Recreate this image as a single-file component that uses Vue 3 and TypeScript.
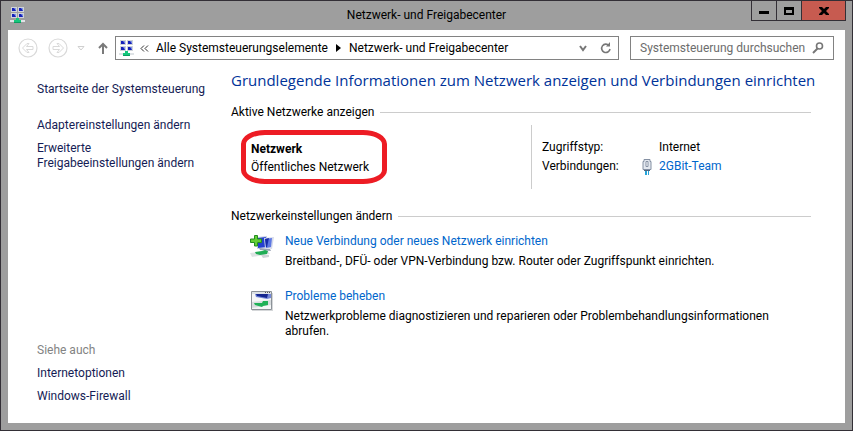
<script setup lang="ts">
import { ref } from 'vue'

interface Task {
  title: string
  text: string
  icon: 'add' | 'repair'
}

const tasks: Task[] = [
  {
    title: 'Neue Verbindung oder neues Netzwerk einrichten',
    text: 'Breitband-, DFÜ- oder VPN-Verbindung bzw. Router oder Zugriffspunkt einrichten.',
    icon: 'add',
  },
  {
    title: 'Probleme beheben',
    text: 'Netzwerkprobleme diagnostizieren und reparieren oder Problembehandlungsinformationen abrufen.',
    icon: 'repair',
  },
]

const query = ref('')
</script>

<template>
  <div class="window">
    <svg class="defs" width="0" height="0" aria-hidden="true">
      <defs>
        <symbol id="net" viewBox="0 0 16 16">
          <path d="M1 0h6v5H1zM8 0h6v5H8zM1 6h6v5H1zM8 6h6v5H8z" fill="#cfd3d9" />
          <path d="M2 1h4v3H2zM9 1h4v3H9zM2 7h4v3H2zM9 7h4v3H9z" fill="#8296e6" />
          <path d="M2 1h2l2 3H2zM9 1h2l2 3H9zM2 7h2l2 3H2zM9 7h2l2 3H9z" fill="#1520b8" />
          <path d="M0 13h15v2H0z" fill="#dfe3e6" />
          <path d="M6 11h3v2h2v3H4v-3h2z" fill="#15c77c" />
          <path d="M4 15h7v1H4z" fill="#0b9c60" />
        </symbol>
      </defs>
    </svg>

    <header class="titlebar">
      <svg class="app-icon" width="16" height="16"><use href="#net" /></svg>
      <h1>Netzwerk- und Freigabecenter</h1>
      <div class="controls">
        <button aria-label="Minimieren"><svg width="10" height="10"><path d="M0 5h10v3H0z" /></svg></button>
        <button aria-label="Maximieren"><svg width="10" height="10"><path d="M0 1h10v8H0zM2 4v3h6V4z" fill-rule="evenodd" /></svg></button>
        <button class="close" aria-label="Schließen">
          <svg width="10" height="10"><path d="M0 1h3l2 2 2-2h3v1L7 5l3 3v1H7L5 7 3 9H0V8l3-3-3-3z" /></svg>
        </button>
      </div>
    </header>

    <div class="panel">
      <nav class="toolbar">
        <button class="round" aria-label="Zurück" disabled>
          <svg width="20" height="20" fill="none" stroke="#d9d9d9">
            <circle cx="10" cy="10" r="9" stroke-width="1.2" />
            <path d="M4.5 10 9 5.5h2L8.5 8.5H15v3H8.5L11 14.5H9z" />
          </svg>
        </button>
        <button class="round" aria-label="Vorwärts" disabled>
          <svg width="20" height="20" fill="none" stroke="#d9d9d9">
            <circle cx="10" cy="10" r="9" stroke-width="1.2" />
            <path d="M15.5 10 11 5.5H9L11.5 8.5H5v3h6.5L9 14.5h2z" />
          </svg>
        </button>
        <button class="recent" aria-label="Zuletzt besucht" disabled>
          <svg width="8" height="5" fill="none" stroke="#cfcfcf"><path d="M1 .5h6L4 4z" /></svg>
        </button>
        <button class="up" aria-label="Nach oben">
          <svg width="10" height="12" fill="none" stroke="#7a7a7a" stroke-width="2"><path d="M5 12V2M1 6l4-4 4 4" /></svg>
        </button>
        <div class="address">
          <svg width="16" height="16"><use href="#net" /></svg>
          <svg class="chevrons" width="9" height="7" fill="none" stroke="#333"><path d="M4 .5l-3 3 3 3M8 .5l-3 3 3 3" /></svg>
          <a href="#elemente">Alle Systemsteuerungselemente</a>
          <svg class="arrow" width="5" height="8"><path d="M0 0l5 4-5 4z" /></svg>
          <a href="#center">Netzwerk- und Freigabecenter</a>
          <button class="drop" aria-label="Verlauf">
            <svg width="8" height="7" fill="none" stroke="#777" stroke-width="2"><path d="M1 1l3 4 3-4" /></svg>
          </button>
          <button aria-label="Aktualisieren">
            <svg width="12" height="12" fill="none" stroke="#777">
              <path d="M9 3.5A4.2 4.2 0 1 0 10 7" stroke-width="1.6" />
              <path d="M6 4.5h4V0z" fill="#777" stroke="none" />
            </svg>
          </button>
        </div>
        <label class="search">
          <input v-model="query" type="text" aria-label="Systemsteuerung durchsuchen" placeholder="Systemsteuerung durchsuchen" />
          <svg width="12" height="12" fill="none" stroke="#777"><circle cx="7.5" cy="4" r="3" stroke-width="1.6" /><path d="M5.5 6.5L1 11" stroke-width="2" /></svg>
        </label>
      </nav>

      <div class="body">
        <aside class="sidebar">
          <a class="home" href="#start">Startseite der Systemsteuerung</a>
          <a href="#adapter">Adaptereinstellungen ändern</a>
          <a href="#freigabe">Erweiterte Freigabeeinstellungen ändern</a>
          <span class="see-also">Siehe auch</span>
          <a href="#internet">Internetoptionen</a>
          <a href="#firewall">Windows-Firewall</a>
        </aside>

        <main class="main">
          <h2>Grundlegende Informationen zum Netzwerk anzeigen und Verbindungen einrichten</h2>

          <section>
            <h3>Aktive Netzwerke anzeigen</h3>
            <div class="active">
              <div class="left">
                <div class="network">
                  <strong>Netzwerk</strong>
                  <span>Öffentliches Netzwerk</span>
                </div>
              </div>
              <dl class="details">
                <dt>Zugriffstyp:</dt>
                <dd>Internet</dd>
                <dt>Verbindungen:</dt>
                <dd>
                  <svg class="plug" width="10" height="16">
                    <path d="M2 .5h6v2h1v8H1v-8h1z" fill="#e3e8ef" stroke="#8490a3" />
                    <path d="M4 2.5h2v5H4z" fill="#fff" stroke="#8490a3" />
                    <path d="M2 11h6v1H2z" fill="#53677e" />
                    <path d="M3 12h2v4H3zM6 12h1v4H6z" fill="#26a3d8" />
                  </svg>
                  <a href="#team">2GBit-Team</a>
                </dd>
              </dl>
            </div>
          </section>

          <section>
            <h3>Netzwerkeinstellungen ändern</h3>
            <ul class="tasks">
              <li v-for="task in tasks" :key="task.title">
                <svg v-if="task.icon === 'add'" width="24" height="24">
                  <path d="M7 3l10-1v12l-10 1z" fill="#c9d0e4" />
                  <path d="M8 4l8-1v10l-8 1z" fill="#2440cf" />
                  <path d="M14 4l10-1-2 12-7-1z" fill="#d5daea" />
                  <path d="M15 5l7-1-1 9-5 1z" fill="#5e78e2" />
                  <path d="M15 5l4-1-2 9h-1z" fill="#172ca9" />
                  <path d="M9 14l11 1 1 2-11-1z" fill="#98a1b4" />
                  <path d="M0 19l18-2 2 3-18 3z" fill="#dfe3e5" />
                  <path d="M5 18l7-1 3-1 3 1-1 3-7 1-4-1z" fill="#20ad55" />
                  <path d="M11 21l8 0 0 2-6 1z" fill="#ced3d6" />
                  <path d="M4.5 1.5h3v3.5h4v3.5h-4v3.5h-3v-3.5h-4v-3.5h4z" fill="#64ce35" stroke="#238d20" />
                </svg>
                <svg v-else width="24" height="24">
                  <path d="M2 4h21v18H2z" fill="#d5d7d9" />
                  <path d="M1.5 2.5h20v18h-20z" fill="#f5f6f7" stroke="#8c9298" />
                  <path d="M2 3h19v2H2z" fill="#dce1e6" />
                  <path d="M15 3h1v1h-1zM17 3h1v1h-1zM19 3h1v1h-1z" fill="#555" />
                  <path d="M5 5h16v4l-4 1-11-2z" fill="#7387d8" />
                  <path d="M6 5h12l-1 4-10-2z" fill="#14258f" />
                  <path d="M2 13l19-2v5l-19 3z" fill="#d8dddf" />
                  <path d="M4 14l8 0 1-2 5 0v4l-5 1-1 1-7-2z" fill="#1fb157" />
                </svg>
                <div class="task-text">
                  <a href="#aufgabe">{{ task.title }}</a>
                  <p>{{ task.text }}</p>
                </div>
              </li>
            </ul>
          </section>
        </main>
      </div>
    </div>
  </div>
</template>

<style>
body {
  margin: 0;
}
</style>

<style scoped>
.window {
  box-sizing: border-box;
  min-height: 100vh;
  display: flex;
  flex-direction: column;
  padding: 0 7px 7px;
  border: 1px solid #332f36;
  background: #9e9e9e;
  color: #000;
  font: 12px/15px Roboto, "Open Sans", sans-serif;
}
.defs {
  position: absolute;
}
svg {
  display: block;
  flex: none;
}
a {
  color: inherit;
  text-decoration: none;
}
button {
  display: flex;
  align-items: center;
  justify-content: center;
  padding: 0;
  border: 0;
  background: none;
}
h1,
h2,
h3,
p,
ul,
dl,
dd {
  margin: 0;
  padding: 0;
  font-size: 12px;
  font-weight: 400;
}
.titlebar {
  display: grid;
  grid-template-columns: 1fr auto 1fr;
  height: 29px;
}
.app-icon {
  margin: 6px 0 0 2px;
}
h1 {
  padding-top: 7px;
}
.controls {
  display: flex;
  justify-self: end;
  height: 19px;
  margin-right: -1px;
  border: solid #332f36;
  border-width: 0 1px 1px;
}
.controls button {
  width: 25px;
  border-right: 1px solid #332f36;
}
.controls .close {
  width: 43px;
  border: 0;
  background: #c75b50;
}
.panel {
  flex: 1;
  display: flex;
  flex-direction: column;
  background: #fff;
}
.toolbar {
  display: flex;
  align-items: center;
  padding: 6px 11px 0 10px;
}
.round {
  margin-right: 10px;
}
.recent {
  margin-left: -1px;
}
.up {
  margin: 0 7px 0 13px;
}
.address,
.search {
  box-sizing: border-box;
  display: flex;
  align-items: center;
  height: 24px;
  border: 1px solid #828282;
}
.address {
  flex: 1;
  padding: 0 6px 0 3px;
}
.chevrons {
  margin: 0 7px 0 5px;
}
.arrow {
  margin: 0 8px;
}
.drop {
  margin: 0 13px 0 auto;
}
.search {
  width: 204px;
  margin-left: 11px;
  padding: 0 9px;
}
.search input {
  flex: 1;
  min-width: 0;
  padding: 0;
  border: 0;
  outline: 0;
  background: none;
  font: inherit;
}
.search input::placeholder {
  color: #6d6d6d;
  opacity: 1;
}
.body {
  flex: 1;
  display: flex;
}
.sidebar {
  flex: none;
  width: 208px;
  box-sizing: border-box;
  display: flex;
  flex-direction: column;
  gap: 8px;
  padding: 22px 8px 19px 29px;
  color: #151c55;
}
.home {
  margin-bottom: 13px;
}
.see-also {
  margin-top: auto;
  color: #838383;
}
.main {
  flex: 1;
  min-width: 0;
  padding: 8px 34px 0 15px;
}
h2 {
  margin-bottom: 13px;
  color: #003399;
  font-family: "Open Sans", "Noto Sans", sans-serif;
  font-size: 15px;
  line-height: 24px;
  white-space: nowrap;
}
h3 {
  display: flex;
  align-items: center;
  gap: 6px;
}
h3::after {
  content: "";
  flex: 1;
  height: 1px;
  background: #ccc;
}
.active {
  display: grid;
  grid-template-columns: 300fr 280fr;
  padding: 5px 0 20px;
}
.left {
  padding: 5px 0 5px 10px;
}
.network {
  display: inline-flex;
  flex-direction: column;
  gap: 3px;
  padding: 7px 13px 4px 5px;
  border: 5px solid #ed1c24;
  border-radius: 24px / 14px;
}
.details {
  display: grid;
  grid-template-columns: 117px 1fr;
  align-content: center;
  row-gap: 4px;
  padding-left: 10px;
  border-left: 1px solid #ccc;
}
.details dd {
  display: flex;
}
.details a,
.task-text a {
  color: #0066cc;
}
.plug {
  margin: 0 7px 0 -17px;
}
.tasks {
  display: grid;
  gap: 20px;
  margin: 10px 0 0 19px;
  padding-right: 24px;
  list-style: none;
}
.tasks li {
  display: flex;
  gap: 11px;
}
.task-text {
  display: grid;
  gap: 5px;
}
</style>
